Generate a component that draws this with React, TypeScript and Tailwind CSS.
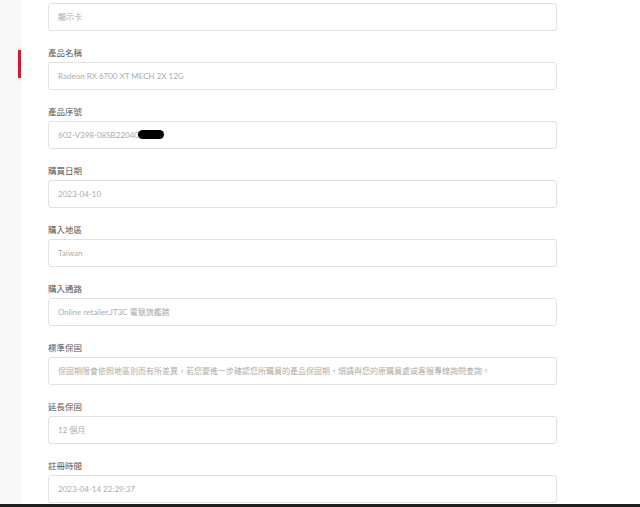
const fields: { label?: string; value: string; redacted?: boolean }[] = [
	{ value: '顯示卡' },
	{ label: '產品名稱', value: 'Radeon RX 6700 XT MECH 2X 12G' },
	{ label: '產品序號', value: '602-V398-08SB22040', redacted: true },
	{ label: '購買日期', value: '2023-04-10' },
	{ label: '購入地區', value: 'Taiwan' },
	{ label: '購入通路', value: 'Online retailer,JT3C 電競旗艦館' },
	{
		label: '標準保固',
		value:
			'保固期限會依照地區別而有所差異，若您要進一步確認您所購買的產品保固期，煩請與您的原購買處或客服專線詢問查詢。',
	},
	{ label: '延長保固', value: '12 個月' },
	{ label: '註冊時間', value: '2023-04-14 22:29:37' },
];

export default function App() {
	return (
		<div
			className="w-[640px] h-[507px] flex flex-col overflow-hidden bg-white"
			style={{ fontFamily: 'Lato, "Noto Sans CJK TC", sans-serif' }}
		>
			<div className="flex flex-1 min-h-0">
				<aside className="w-[21px] shrink-0 bg-[#f8f8f8]">
					<div className="ml-[18px] mt-[50px] w-[3px] h-[28px] bg-[#d7182a]" />
				</aside>
				<main className="flex-1 pl-[27px] pt-[3px]">
					{fields.map((f, i) => (
						<div key={i} className={i === 0 ? '' : 'mt-[16px]'}>
							{f.label && (
								<label className="block text-[8.5px] leading-[12px] text-[#555] mb-[3.5px]">
									{f.label}
								</label>
							)}
							<div className="w-[509px] h-[27.5px] border border-[#e2e2e2] rounded-[3px] flex items-center pl-[9px] text-[8px] text-[#ababab] whitespace-nowrap overflow-hidden">
								<span>{f.value}</span>
								{f.redacted && (
									<span className="inline-block w-[26px] h-[9px] rounded-full bg-black -ml-[1px]" />
								)}
							</div>
						</div>
					))}
				</main>
			</div>
			<div className="h-[3px] shrink-0 bg-[#1e1e1e]" />
		</div>
	);
}
